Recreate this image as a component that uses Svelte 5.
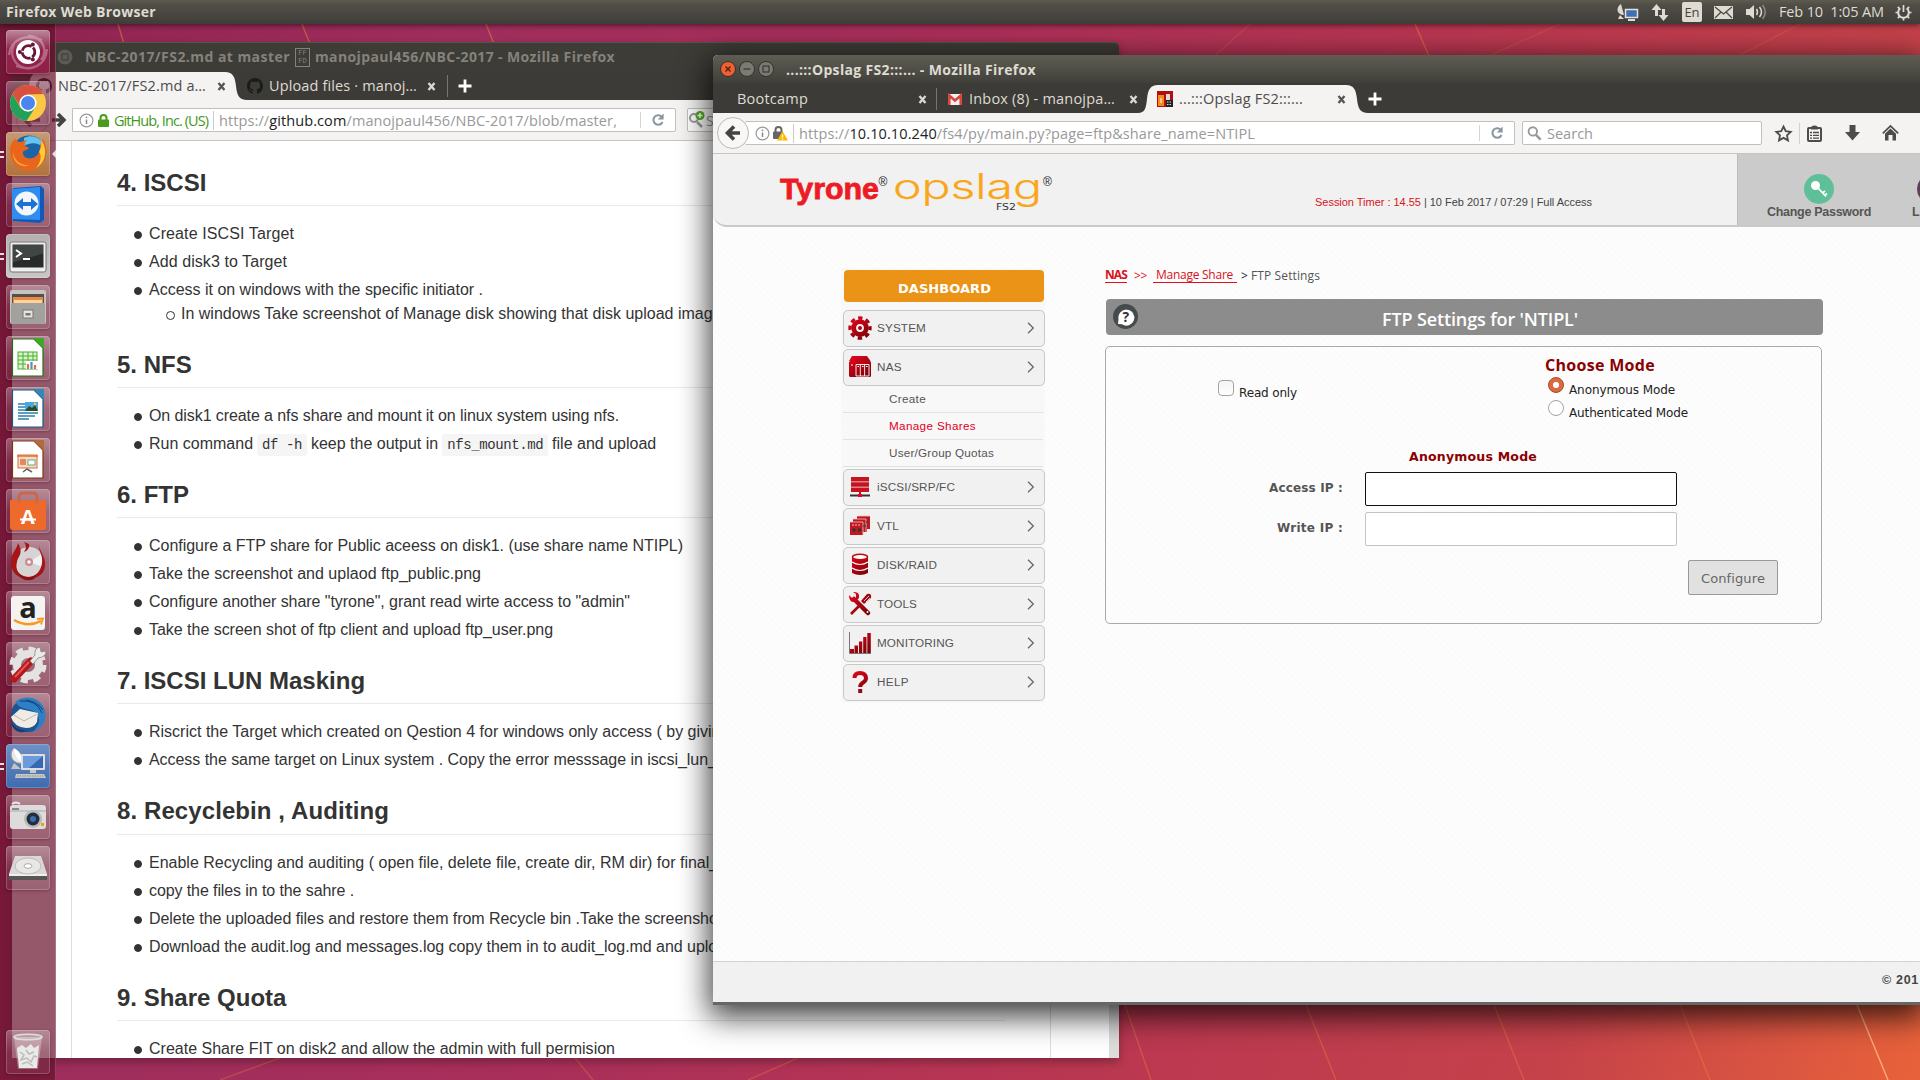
<script>
  // Adjusts tracking so that a label occupies the given width.
  function fit(node, width) {
    if (!width) return;
    const natural = node.getBoundingClientRect().width;
    const count = node.textContent.length;
    node.style.letterSpacing = `${(width - natural) / count}px`;
  }

  const launcher = [
    { id: 'dash', tone: 'wine' },
    { id: 'chrome' },
    { id: 'firefox', tone: 'amber', windows: true, focused: true },
    { id: 'teamviewer' },
    { id: 'terminal', tone: 'silver', windows: true },
    { id: 'files' },
    { id: 'calc' },
    { id: 'writer' },
    { id: 'impress' },
    { id: 'software' },
    { id: 'burner' },
    { id: 'amazon' },
    { id: 'settings' },
    { id: 'thunderbird' },
    { id: 'remote', tone: 'azure', windows: true },
    { id: 'camera' },
    { id: 'disk' },
    { id: 'trash', last: true }
  ];

  const sections = [
    {
      title: '4. ISCSI',
      items: [
        { text: 'Create ISCSI Target', w: 145 },
        { text: 'Add disk3 to Target', w: 138 },
        {
          text: 'Access it on windows with the specific initiator .',
          w: 334,
          sub: 'In windows Take screenshot of Manage disk showing that disk upload image'
        }
      ]
    },
    {
      title: '5. NFS',
      items: [
        { text: 'On disk1 create a nfs share and mount it on linux system using nfs.', w: 470 },
        { parts: ['Run command ', 'df -h', ' keep the output in ', 'nfs_mount.md', ' file and upload'] }
      ]
    },
    {
      title: '6. FTP',
      items: [
        { text: 'Configure a FTP share for Public aceess on disk1. (use share name NTIPL)', w: 534 },
        { text: 'Take the screenshot and uplaod ftp_public.png', w: 332 },
        { text: 'Configure another share "tyrone", grant read wirte access to "admin"', w: 481 },
        { text: 'Take the screen shot of ftp client and upload ftp_user.png', w: 404 }
      ]
    },
    {
      title: '7. ISCSI LUN Masking',
      items: [
        { text: 'Riscrict the Target which created on Qestion 4 for windows only access ( by giving' },
        { text: 'Access the same target on Linux system . Copy the error messsage in iscsi_lun_', tight: true }
      ]
    },
    {
      title: '8. Recyclebin , Auditing',
      w: 272,
      items: [
        { text: 'Enable Recycling and auditing ( open file, delete file, create dir, RM dir) for final_' },
        { text: 'copy the files in to the sahre .', w: 205 },
        { text: 'Delete the uploaded files and restore them from Recycle bin .Take the screenshot', tight: true },
        { text: 'Download the audit.log and messages.log copy them in to audit_log.md and upload', tight: true }
      ]
    },
    {
      title: '9. Share Quota',
      items: [{ text: 'Create Share FIT on disk2 and allow the admin with full permision', w: 466 }]
    }
  ];

  const menu = [
    { label: 'SYSTEM', icon: 'gear', w: 49 },
    {
      label: 'NAS',
      icon: 'nas',
      w: 25,
      subs: [
        { label: 'Create', w: 37 },
        { label: 'Manage Shares', w: 87, active: true },
        { label: 'User/Group Quotas', w: 105 }
      ]
    },
    { label: 'iSCSI/SRP/FC', icon: 'iscsi', w: 78 },
    { label: 'VTL', icon: 'vtl', w: 22 },
    { label: 'DISK/RAID', icon: 'raid', w: 60 },
    { label: 'TOOLS', icon: 'tools', w: 40 },
    { label: 'MONITORING', icon: 'bars', w: 77 },
    { label: 'HELP', icon: 'help', w: 32 }
  ];

  let mode = $state('anonymous');
  let readOnly = $state(false);
</script>

{#snippet github(color)}
  <svg width="16" height="16" viewBox="0 0 16 16"><path fill={color} d="M8 0C3.58 0 0 3.58 0 8c0 3.54 2.29 6.53 5.47 7.59.4.07.55-.17.55-.38 0-.19-.01-.82-.01-1.49-2.01.37-2.53-.49-2.69-.94-.09-.23-.48-.94-.82-1.13-.28-.15-.68-.52-.01-.53.63-.01 1.08.58 1.23.82.72 1.21 1.87.87 2.33.66.07-.52.28-.87.51-1.07-1.78-.2-3.64-.89-3.64-3.95 0-.87.31-1.59.82-2.15-.08-.2-.36-1.02.08-2.12 0 0 .67-.21 2.2.82.64-.18 1.32-.27 2-.27s1.36.09 2 .27c1.53-1.04 2.2-.82 2.2-.82.44 1.1.16 1.92.08 2.12.51.56.82 1.27.82 2.15 0 3.07-1.87 3.75-3.65 3.95.29.25.54.73.54 1.48 0 1.07-.01 1.93-.01 2.2 0 .21.15.46.55.38A8.01 8.01 0 0 0 16 8c0-4.42-3.58-8-8-8z" /></svg>
{/snippet}

{#snippet cross(color)}
  <svg class="cross" width="9" height="9" viewBox="0 0 9 9"><path d="M1.5 1l6 7M7.5 1l-6 7" stroke={color} stroke-width="2.3" /></svg>
{/snippet}

{#snippet plus()}
  <svg width="14" height="14" viewBox="0 0 14 14"><path d="M7 .5v13M.5 7h13" stroke="#fff" stroke-width="2.8" /></svg>
{/snippet}

{#snippet curveIn()}
  <svg width="20" height="28" viewBox="0 0 20 28"><path d="M0 28C7 28 8 23 9 14S12 0 20 0V28Z" fill="#f4f3f2" /></svg>
{/snippet}

{#snippet curveOut()}
  <svg width="22" height="28" viewBox="0 0 22 28"><path d="M0 0C8 0 10 5 11 14S14 28 22 28H0Z" fill="#f4f3f2" /></svg>
{/snippet}

{#snippet info()}
  <svg width="15" height="15" viewBox="0 0 15 15"><circle cx="7.5" cy="7.5" r="6.4" fill="none" stroke="#999" stroke-width="1.2" /><path d="M7.5 6.5V11" stroke="#888" stroke-width="1.5" /><circle cx="7.5" cy="4.3" r=".9" fill="#888" /></svg>
{/snippet}

{#snippet reload()}
  <svg width="14" height="14" viewBox="0 0 14 14"><path d="M11.2 4.2A4.8 4.8 0 1 0 11.6 9" fill="none" stroke="#8b96a3" stroke-width="2" /><path d="M12.6 0.6V6.6H6.8Z" fill="#8b96a3" /></svg>
{/snippet}

{#snippet magnifier()}
  <svg width="15" height="15" viewBox="0 0 15 15"><circle cx="5.8" cy="5.4" r="4.2" fill="none" stroke="#999" stroke-width="1.9" /><path d="M9 8.8l4.6 4.8" stroke="#999" stroke-width="2.4" /></svg>
{/snippet}

{#snippet appIcon(id)}
  <svg width="44" height="44" viewBox="0 0 44 44">
    {#if id === 'dash'}
      <path d="M3 25C5 8 20 4 36 10M41 19C40 36 25 42 10 36M8 14C2 28 12 40 26 38M35 30C43 20 36 6 22 6" fill="none" stroke="#fff" stroke-opacity=".3" stroke-width="2.4" />
      <circle cx="22" cy="22" r="12" fill="#fff" />
      <circle cx="22.5" cy="22" r="6.3" fill="none" stroke="#6b1638" stroke-width="2.8" stroke-dasharray="11.6 1.6" stroke-dashoffset="5.8" />
      <circle cx="13.8" cy="22" r="2" fill="#6b1638" /><circle cx="26.8" cy="14.5" r="2" fill="#6b1638" /><circle cx="26.8" cy="29.5" r="2" fill="#6b1638" />
    {:else if id === 'chrome'}
      <circle cx="22" cy="22" r="18" fill="#fbc846" />
      <path d="M6.4 13A18 18 0 0 1 37.6 13L22 13.5 14.5 26Z" fill="#d9503f" />
      <path d="M6.4 13A18 18 0 0 0 20.5 40L29.5 26 22 31 14.3 26.5Z" fill="#23a05a" />
      <circle cx="22" cy="22" r="8.6" fill="#fff" /><circle cx="22" cy="22" r="7" fill="#4b86ee" />
    {:else if id === 'firefox'}
      <circle cx="23" cy="20.5" r="17" fill="#1c64a8" /><path d="M18 6C27 1 38 7 39 17C32 10 25 10 18 14Z" fill="#65c3ee" />
      <path d="M4 18C4 13 7 9 9 6c1 3 3 4 5 4 3 0 4-2 7-2-2 2-3 4-2 6l4 2c-1 2-5 2-6 4-1 6 7 8 12 5 4-2 5-7 5-11l3-7c6 10 4 24-7 30C18 43 4 34 4 18Z" fill="#e9651c" />
      <path d="M35 8c7 9 5 23-5 28 5-6 6-12 3-16 2-4 3-7 2-12Z" fill="#ffcb35" />
      <path d="M7 20c1 9 9 14 17 13-9 4-18-3-17-13Z" fill="#f8a53a" />
    {:else if id === 'teamviewer'}
      <path d="M7 5L35 3l3 3v31l-4 3L7 38Z" fill="#1258b8" /><path d="M6 6l28-2v33L6 36Z" fill="#2f8df0" />
      <circle cx="20.5" cy="20.5" r="12" fill="#f2f6fa" /><path d="M10 21l7-6v4h8v-4l7 6-7 6v-4h-8v4Z" fill="#1c72d4" />
    {:else if id === 'terminal'}
      <rect x="4" y="8" width="36" height="30" rx="2" fill="#eee" stroke="#777" /><rect x="6.5" y="10.5" width="31" height="23" fill="#272c2b" />
      <path d="M6.5 10.5h31v9l-31 9Z" fill="#fff" fill-opacity=".12" /><path d="M10 16l5 3.500-5 3.500M17 25h7" fill="none" stroke="#fff" stroke-width="2" />
    {:else if id === 'files'}
      <rect x="4" y="5" width="36" height="34" rx="2" fill="#c4c3c0" /><rect x="6" y="9" width="32" height="11" fill="#55504b" />
      <path d="M7 12h30v7H7Z" fill="#e98a42" /><path d="M8 15h28v4H8Z" fill="#ffd29b" /><rect x="5" y="18" width="34" height="21" rx="1" fill="#a3a19d" /><rect x="17" y="25" width="10" height="8" fill="#e4e3e1" stroke="#777" /><rect x="19.500" y="28" width="5" height="2.500" fill="#777" />
    {:else if id === 'calc'}
      <path d="M6.500 3H28l9 9v28H6.500Z" fill="#fff" stroke="#256e14" stroke-width="1.2" /><path d="M27 2h11v11Z" fill="#3fa927" />
      <rect x="12" y="16" width="19" height="17" fill="#d9f3cf" stroke="#4aae31" /><path d="M12 20h19M12 24h19M12 28h19M17 16v17M22 16v17M27 16v17" stroke="#4aae31" />
      <rect x="20" y="25" width="12" height="8" fill="#fff" /><path d="M22 33v-5M29 33v-4" stroke="#e2703a" stroke-width="2.2" /><path d="M25.500 33v-7" stroke="#4a8fd0" stroke-width="2.2" />
    {:else if id === 'writer'}
      <path d="M6.500 3H28l9 9v28H6.500Z" fill="#fff" stroke="#145a85" stroke-width="1.2" /><path d="M27 2h11v11Z" fill="#3488b8" />
      <path d="M12 17h7M12 20h7M12 23h7M12 26h20M12 29h17M12 32h11" stroke="#2a7fb0" stroke-width="1.5" /><rect x="19" y="15" width="13" height="9" fill="#4aa8df" /><path d="M19 24l4-5 3 2 3-3 3 6Z" fill="#2d4a24" /><circle cx="29" cy="17" r="1.3" fill="#fc3" />
    {:else if id === 'impress'}
      <path d="M6.500 3H28l9 9v28H6.500Z" fill="#fff" stroke="#7a3512" stroke-width="1.2" /><path d="M27 2h11v11Z" fill="#b4683d" />
      <rect x="12" y="17" width="19" height="13" fill="#fbd9c4" stroke="#d5733c" /><path d="M11 18h21M14 22h6M14 24h6M14 26h6" stroke="#d5733c" stroke-width="1.5" /><rect x="22" y="22" width="7" height="5" fill="#fff" stroke="#5fae8a" /><path d="M17 34l4-3 5 3" fill="none" stroke="#666" stroke-width="1.5" />
    {:else if id === 'software'}
      <path d="M4 11h36v27q0 3-3 3H7q-3 0-3-3Z" fill="#ee6a2c" /><path d="M13 14V8q0-4 4-4h10q4 0 4 4v6" fill="none" stroke="#c9684a" stroke-width="3" />
      <text x="22" y="35" text-anchor="middle" class="glyph white" font-size="20">A</text><path d="M14 30.500h16" stroke="#fff" stroke-width="2" />
    {:else if id === 'burner'}
      <circle cx="23" cy="22" r="15" fill="#d8d4d4" /><path d="M23 22L36 14a15 15 0 0 1 1 13Z" fill="#fff" fill-opacity=".7" /><circle cx="23" cy="22" r="4" fill="#c98a96" /><circle cx="23" cy="22" r="1.8" fill="#fff" />
      <path d="M12 3c-1 6-6 9-7 17-1 11 6 19 16 18-9-3-12-9-10-16 1-6 7-8 1-19ZM33 6c0 6 4 9 3 17-1 7-5 12-11 15 9 0 15-6 14-16-1-7-4-9-6-16Z" fill="#a61618" /><path d="M18 2c3 4 2 7 0 10 3-1 6-4 5-8" fill="#a61618" /><path d="M12 33q10 8 20 0l-4 6q-7 3-13-1Z" fill="#8e1014" />
    {:else if id === 'amazon'}
      <rect x="5" y="5" width="34" height="34" rx="3" fill="#f4f3f2" /><text x="22" y="27" text-anchor="middle" class="glyph black" font-size="29">a</text><path d="M8 29q14 8 27 1" fill="none" stroke="#f79a1c" stroke-width="2.5" /><path d="M31 28l6-.500-2 6" fill="none" stroke="#f79a1c" stroke-width="1.8" />
    {:else if id === 'settings'}
      <circle cx="22" cy="23" r="11" fill="none" stroke="#e4e3e1" stroke-width="8" /><circle cx="22" cy="23" r="16" fill="none" stroke="#e4e3e1" stroke-width="5" stroke-dasharray="7 5.566" />
      <path d="M8 37L25 19" stroke="#b3191c" stroke-width="7" stroke-linecap="round" /><path d="M9 35L23 20" stroke="#e8524d" stroke-width="2" /><path d="M24 19l5-6q-1-7 5-8l1 5 5-1q0 6-8 7l-5 6Z" fill="#eceae8" stroke="#888" stroke-width=".8" />
    {:else if id === 'thunderbird'}
      <circle cx="22" cy="22" r="17" fill="#1c5590" />
      <path d="M9 9C22-1 39 7 39.500 22c0 9-6 15-13 17 7-6 8-12 5-17-5-8-18-4-22-13Z" fill="#2f7fc4" />
      <path d="M5 24l9-8 18 4-1 9q-3 6-11 6Q8 34 5 24Z" fill="#efece6" /><path d="M8 22l10 6 13-7" fill="none" stroke="#bbb6ac" /><path d="M5 26q3 11 16 12-10 4-15-5Z" fill="#153f74" />
      <path d="M14 8q16-2 22 12M20 7q12 2 17 10" stroke="#123f73" fill="none" />
    {:else if id === 'remote'}
      <path d="M8 4C2 10 6 21 17 19Z" fill="#e9e9e7" stroke="#999" /><path d="M8 4q9 5 9 15Q8 14 8 4Z" fill="#fff" /><path d="M8 19L5 25h10Z" fill="#c4c4c0" />
      <rect x="15" y="10" width="24" height="16" rx="1" fill="#ddd" /><rect x="17" y="12" width="20" height="12" fill="#3568b4" /><path d="M17 12h20l-14 12h-6Z" fill="#6d9ada" /><path d="M24 26h6v3h-6ZM10 30h28l2 4H9Z" fill="#c9c9c6" /><path d="M11 32h27" stroke="#888" stroke-dasharray="1.5 1" />
    {:else if id === 'camera'}
      <rect x="4" y="10" width="36" height="24" rx="3" fill="#dddcda" /><path d="M6 9q4-3 8 0" stroke="#eee" stroke-width="2" fill="none" /><path d="M4 16h36" stroke="#aaa" /><circle cx="27" cy="24" r="9" fill="#b9b9b9" /><circle cx="27" cy="24" r="6.5" fill="#222e3c" /><circle cx="27" cy="24" r="3" fill="#3a6eb0" /><rect x="35" y="28" width="3" height="3" fill="#f49b1f" /><path d="M6 13h7v2H6Z" fill="#888" />
    {:else if id === 'disk'}
      <path d="M9 10h26l6 18v6H3v-6Z" fill="#d9d8d7" /><path d="M3 28h38v6H3Z" fill="#575655" /><path d="M3 28h38v2H3Z" fill="#efefef" /><ellipse cx="22" cy="20" rx="13" ry="8" fill="#e8e7e6" stroke="#bbb" /><ellipse cx="22" cy="20" rx="4" ry="2.3" fill="#fff" stroke="#aaa" />
    {:else}
      <path d="M8 7l4 32h20l4-32Z" fill="#fff" fill-opacity=".3" /><path d="M11 18l5-3 4 3 5-4 3 4 5-3-2 23H13Z" fill="#e9e9e8" /><path d="M14 22l4 3-3 5 6-2 4 4 3-6 3 1M20 20l3 4 5-2M16 34l5-2 6 4" stroke="#bdbcbb" fill="none" stroke-width="1.5" /><ellipse cx="22" cy="7" rx="14" ry="2.8" fill="#fff" fill-opacity=".2" stroke="#ddd" stroke-width="1.6" />
    {/if}
  </svg>
{/snippet}

{#snippet menuIcon(id)}
  <svg width="24" height="24" viewBox="0 0 24 24">
    {#if id === 'gear'}
      <circle cx="12" cy="12" r="6.3" fill="none" stroke="url(#red)" stroke-width="4.8" /><circle cx="12" cy="12" r="10" fill="none" stroke="url(#red)" stroke-width="3.4" stroke-dasharray="4.4 3.454" stroke-dashoffset="2.2" /><circle cx="12" cy="12" r="2" fill="url(#red)" />
    {:else if id === 'nas'}
      <path d="M4 1h15l3.500 5H1Z" fill="url(#red)" /><rect x="1" y="6" width="22" height="16" rx="1.5" fill="url(#red)" /><path d="M8 9.500h13V21H8ZM12.300 9.500V21M16.600 9.500V21" fill="none" stroke="#fff" stroke-width=".9" /><path d="M3 10h2M9.500 11.500h1.500M14 11.500h1.500M18 11.500h1.500" stroke="#fff" />
    {:else if id === 'iscsi'}
      <path d="M3 2h18v4.500H3ZM3 7.300h18v4.500H3ZM3 12.600h18v4.500H3Z" fill="#c5141f" /><path d="M12 17v4" stroke="#c5141f" stroke-width="2" /><path d="M2 20.500h20" stroke="#333" stroke-width="2" /><path d="M10 20.500h4" stroke="#e02" stroke-width="3" />
    {:else if id === 'vtl'}
      <path d="M9 2h13v13h-3v3h-4v3H2V8h3V5h4Z" fill="#c01820" /><path d="M2 8h13v13M5 5h13v13M9 2h13" fill="none" stroke="#f3c4c6" stroke-width=".8" /><circle cx="6" cy="16" r="1.8" fill="#333" /><circle cx="11.5" cy="16" r="1.8" fill="#333" /><path d="M4 11h9" stroke="#fbb" stroke-dasharray="2 1" /><circle cx="19.5" cy="8" r="1.3" fill="#444" /><circle cx="16.5" cy="12" r="1.3" fill="#444" />
    {:else if id === 'raid'}
      <path d="M4 4h16v16q-8 4-16 0Z" fill="url(#red)" /><ellipse cx="12" cy="4" rx="7.5" ry="2.8" fill="#fff" stroke="#c20b16" stroke-width="1.5" /><path d="M4 9q8 5 16 0M4 15q8 5 16 0" fill="none" stroke="#fff" stroke-width="1.2" />
    {:else if id === 'tools'}
      <path d="M6 7l14 14" stroke="url(#red)" stroke-width="4.5" stroke-linecap="round" /><path d="M1 3l4 4 3-1 0-4-3-2q7-1 6 6l-4 4Q1 11 1 3Z" fill="url(#red)" /><path d="M3 22L13 12" stroke="#a20710" stroke-width="2.6" /><path d="M13 9l6-7q5-1 4 4l-7 6Z" fill="#a30912" /><path d="M16 9l5-5M18 10l4-4" stroke="#eee" stroke-width=".8" /><circle cx="19.5" cy="20" r="1" fill="#fff" />
    {:else if id === 'bars'}
      <path d="M1.500 1v21.500H23" fill="none" stroke="#777" /><path d="M2 18h4v4H2ZM6.500 14.500h3.500V22H6.500ZM11 10.500h3.300V22H11ZM15.200 6h3.300v16h-3.300ZM19.300 2h3.500v20h-3.500Z" fill="url(#red)" />
    {:else}
      <path d="M6.500 8Q6.500 3 12 3t6 5q0 3-3.500 5-2.300 1.500-2.300 4" fill="none" stroke="url(#red)" stroke-width="4" /><rect x="10.2" y="19" width="4" height="4" fill="#a0050f" />
    {/if}
  </svg>
{/snippet}

<svg class="defs" width="0" height="0" aria-hidden="true">
  <defs><linearGradient id="red" gradientUnits="userSpaceOnUse" x1="4" y1="2" x2="18" y2="22"><stop offset="0" stop-color="#e0061c" /><stop offset="1" stop-color="#7c0208" /></linearGradient></defs>
</svg>

<div class="desktop">
  <svg class="wall" width="1920" height="1080" viewBox="0 0 1920 1080">
    <g stroke="#f08a3c" fill="none" stroke-width="1.5">
      <path d="M118 24l9 30M302 24l8 20M486 24l8 20M1415 24l14 32" opacity=".45" />
      <path d="M1560 24l-80 36M1800 24l-70 36M1250 24l-40 36" opacity=".18" />
      <path d="M1125 1005l26 75M1306 1005l30 75M1494 1005l30 75M1680 1005l30 75" opacity=".35" />
      <path d="M1857 1005l31 75" stroke="#ffb47c" opacity=".85" />
      <path d="M798 1058l-50 22M280 1058l-60 22M575 1058l18 22" opacity=".3" />
    </g>
  </svg>

  <header class="panel-bar">
    <span class="app-name" use:fit={150}>Firefox Web Browser</span>
    <div class="indicators">
      <svg width="23" height="18" viewBox="0 0 23 18"><path d="M5 1C-1 5 1 12 8 12Z" fill="#ddd8cf" /><path d="M4 12l-2 4h6Z" fill="#ddd8cf" /><rect x="9.5" y="6.5" width="12" height="8" fill="#3f70b6" stroke="#e6e2da" stroke-width="1.5" /><path d="M12 17h7" stroke="#ddd" stroke-width="2" /></svg>
      <svg class="i-net" width="18" height="17" viewBox="0 0 18 17"><path d="M5.500 12V3M12.500 5v9" stroke="#dfdbd2" stroke-width="3" /><path d="M.500 6L5.500 0l5 6ZM7.500 11l5 6 5-6Z" fill="#dfdbd2" /></svg>
      <span class="lang">En</span>
      <svg class="i-mail" width="19" height="13" viewBox="0 0 19 13"><rect width="19" height="13" fill="#dfdbd2" /><path d="M1 1l8.500 7L18 1M1 12l6-6M18 12l-6-6" fill="none" stroke="#4b4943" stroke-width="1.3" /></svg>
      <svg class="i-vol" width="21" height="16" viewBox="0 0 21 16"><path d="M0 5h3.500L8 1v14L3.500 11H0Z" fill="#dfdbd2" /><path d="M10.500 5q2 3 0 6M13.500 3q4 5 0 10" fill="none" stroke="#dfdbd2" stroke-width="1.5" /><path d="M16.500 1q5.500 7 0 14" fill="none" stroke="#8d8a82" stroke-width="1.5" /></svg>
      <span class="clock" use:fit={105}>Feb 10&nbsp; 1:05 AM</span>
      <svg class="i-power" width="17" height="17" viewBox="0 0 17 17"><path d="M5.300 4.300a5.300 5.300 0 1 0 6.400 0" fill="none" stroke="#dfdbd2" stroke-width="2" /><path d="M8.500 1v7M.500 8.500h3M13.500 8.500h3M8.500 13.500v3M2.800 2.800l2 2M14.200 2.800l-2 2M2.800 14.200l2-2M14.200 14.200l-2-2" stroke="#dfdbd2" stroke-width="1.7" /></svg>
    </div>
  </header>

  <section class="window back">
    <div class="titlebar">
      <svg width="16" height="16" viewBox="0 0 16 16"><circle cx="8" cy="8" r="7.5" fill="#5d5b56" /><rect x="5" y="5" width="6" height="6" fill="none" stroke="#3c3b37" /></svg>
      <span class="title first" use:fit={205}>NBC-2017/FS2.md at master</span>
      <span class="tofu"><i>FF</i><i>FD</i></span>
      <span class="title" use:fit={300}>manojpaul456/NBC-2017 - Mozilla Firefox</span>
    </div>
    <div class="tabs">
      {@render curveIn()}
      <div class="tab active first-tab">
        {@render github('#222')}
        <span use:fit={148}>NBC-2017/FS2.md a…</span>
        {@render cross('#555')}
      </div>
      {@render curveOut()}
      <div class="tab second-tab">
        {@render github('#1b1b1a')}
        <span use:fit={148}>Upload files · manoj…</span>
        {@render cross('#ddd9d0')}
      </div>
      <div class="new-tab">{@render plus()}</div>
    </div>
    <div class="nav">
      <svg width="60" height="32" viewBox="0 0 60 32"><circle cx="20" cy="16" r="15.5" fill="#f7f6f5" stroke="#bbb" /><path d="M28 16H13m6-6l-6 6 6 6" fill="none" stroke="#555" stroke-width="3.5" /><path d="M40 16h11m-5-6l6 6-6 6" fill="none" stroke="#444" stroke-width="3.5" /></svg>
      <div class="url back-url">
        {@render info()}
        <svg class="lock" width="11" height="13" viewBox="0 0 11 13"><path d="M2.500 6V4a3 3 0 0 1 6 0v2" fill="none" stroke="#4a9a1c" stroke-width="2" /><rect x="0" y="5.5" width="11" height="7.5" rx="1" fill="#4a9a1c" /></svg>
        <span class="secure" use:fit={94}>GitHub, Inc. (US)</span>
        <span class="addr" use:fit={404}>https://<b>github.com</b>/manojpaul456/NBC-2017/blob/master,</span>
        <span class="reload">{@render reload()}</span>
      </div>
      <div class="search back-search">
        <svg width="18" height="20" viewBox="0 0 18 20"><circle cx="6" cy="8" r="4" fill="none" stroke="#999" stroke-width="2" /><path d="M9 12l5 5" stroke="#999" stroke-width="2.5" /><circle cx="12" cy="5.5" r="4.5" fill="#4caf1f" /><path d="M9.500 5.500h5M12 3v5" stroke="#fff" stroke-width="1.5" /></svg>
        <span>Search</span>
      </div>
    </div>
    <div class="readme">
      <article>
        {#each sections as s}
          <h2><span use:fit={s.w}>{s.title}</span></h2>
          <ul>
            {#each s.items as item}
              <li>
                {#if item.parts}
                  {#each item.parts as p, i}{#if i % 2}<code>{p}</code>{:else}{p}{/if}{/each}
                {:else}<span class={{ tight: item.tight }} use:fit={item.w}>{item.text}</span>{/if}
                {#if item.sub}<ul class="nested"><li>{item.sub}</li></ul>{/if}
              </li>
            {/each}
          </ul>
        {/each}
      </article>
      <div class="scroll"></div>
    </div>
  </section>

  <nav class="launcher">
    {#each launcher as app}
      <div class={['tile', app.tone, app.last && 'last']}>
        {@render appIcon(app.id)}
        {#if app.windows}<span class="pips"></span>{/if}
        {#if app.focused}<span class="arrow"></span>{/if}
      </div>
    {/each}
  </nav>

  <section class="window front">
    <div class="titlebar">
      <svg width="16" height="16" viewBox="0 0 16 16"><circle cx="8" cy="8" r="7.5" fill="#ee5f31" stroke="#34322d" /><path d="M5.500 5.500l5 5M10.500 5.500l-5 5" stroke="#54210f" stroke-width="1.4" /></svg>
      <svg width="16" height="16" viewBox="0 0 16 16"><circle cx="8" cy="8" r="7.5" fill="#7b7a73" stroke="#34322d" /><path d="M4.500 8h7" stroke="#3a3935" stroke-width="1.3" /></svg>
      <svg width="16" height="16" viewBox="0 0 16 16"><circle cx="8" cy="8" r="7.5" fill="#7b7a73" stroke="#34322d" /><rect x="5" y="5" width="6" height="6" fill="none" stroke="#3a3935" stroke-width="1.2" /></svg>
      <span class="title" use:fit={250}>...:::Opslag FS2:::... - Mozilla Firefox</span>
    </div>
    <div class="tabs">
      <div class="tab t1"><span use:fit={71}>Bootcamp</span>{@render cross('#ddd9d0')}</div>
      <div class="tab t2">
        <svg width="14" height="11" viewBox="0 0 14 11"><rect width="14" height="11" rx="1" fill="#f3f1ee" /><path d="M1.300 11V1.500L7 6.500l5.700-5V11" fill="none" stroke="#d8433a" stroke-width="2.5" /></svg>
        <span use:fit={146}>Inbox (8) - manojpa…</span>{@render cross('#ddd9d0')}
      </div>
      {@render curveIn()}
      <div class="tab active t3">
        <svg width="16" height="16" viewBox="0 0 16 16"><rect width="16" height="16" fill="#b40d10" /><rect x="1" y="4" width="6" height="11" fill="#f58a1c" /><rect x="9" y="3" width="4" height="6" fill="#ddd" /><rect x="9" y="9" width="7" height="7" fill="#222" /><path d="M10 11h5M10 13.500h5" stroke="#ddd" stroke-dasharray="1.5 1" /><path d="M4 7v5" stroke="#fff" /></svg>
        <span use:fit={124}>...:::Opslag FS2:::...</span>{@render cross('#555')}
      </div>
      {@render curveOut()}
      <div class="new-tab">{@render plus()}</div>
    </div>
    <div class="nav">
      <svg class="back-btn" width="32" height="32" viewBox="0 0 32 32"><circle cx="16" cy="16" r="15.5" fill="#f8f7f6" stroke="#bcbab8" /><path d="M23 16H11m6-6.500l-6.500 6.500 6.500 6.500" fill="none" stroke="#444" stroke-width="3.6" /></svg>
      <div class="url front-url">
        {@render info()}
        <svg class="warn" width="15" height="15" viewBox="0 0 15 15"><path d="M2.500 6V4a3 3 0 0 1 6 0v2" fill="none" stroke="#666" stroke-width="2" /><rect y="5.5" width="10" height="7.5" rx="1" fill="#666" /><path d="M9.500 5l5.500 9.500H4Z" fill="#fbb800" /><path d="M9.500 8.500v3M9.500 12.300v1.200" stroke="#fff" stroke-width="1.3" /></svg>
        <span class="addr" use:fit={462}>https://<b>10.10.10.240</b>/fs4/py/main.py?page=ftp&amp;share_name=NTIPL</span>
        <span class="reload">{@render reload()}</span>
      </div>
      <div class="search front-search">{@render magnifier()}<span use:fit={46}>Search</span></div>
      <div class="tools">
        <svg width="17" height="17" viewBox="0 0 17 17"><path d="M8.500 1.500l2.200 4.700 5 .600-3.700 3.500 1 5.100-4.500-2.500L4 15.400l1-5.100L1.300 6.800l5-.600Z" fill="none" stroke="#4c4c4c" stroke-width="1.8" /></svg>
        <i class="bar"></i>
        <svg width="15" height="17" viewBox="0 0 15 17"><rect x="1" y="3" width="13" height="13" rx="1" fill="none" stroke="#4c4c4c" stroke-width="2" /><path d="M4 3q0-2.500 3.500-2.500T11 3v1.500H4Z" fill="#4c4c4c" /><path d="M3 7.500h2M6 7.500h6M3 10.300h2M6 10.300h6M3 13.100h2M6 13.100h6" stroke="#4c4c4c" stroke-width="1.3" /></svg>
        <svg class="i-down" width="15" height="16" viewBox="0 0 15 16"><path d="M4.500 0h6v7H15l-7.500 8.500L0 7h4.500Z" fill="#4c4c4c" /></svg>
        <svg class="i-home" width="17" height="16" viewBox="0 0 17 16"><path d="M.800 8.300L8.500 1l7.700 7.300" fill="none" stroke="#4c4c4c" stroke-width="1.7" /><path d="M3 8.700L8.500 3.500 14 8.700V15.500h-3.500V10h-4v5.500H3Z" fill="#4c4c4c" /></svg>
      </div>
    </div>

    <div class="site-head">
      <svg class="logo" width="280" height="50" viewBox="0 0 280 50">
        <text x="0" y="29" textLength="99" lengthAdjust="spacingAndGlyphs" class="tyrone">Tyrone</text>
        <text x="98.5" y="16" class="reg">®</text>
        <text x="113" y="29" textLength="149" lengthAdjust="spacingAndGlyphs" class="opslag">opslag</text>
        <text x="216" y="40" textLength="20" lengthAdjust="spacingAndGlyphs" class="fs2">FS2</text>
        <text x="263" y="16" class="reg">®</text>
      </svg>
      <p class="session" use:fit={277}><em>Session Timer : 14.55</em> | 10 Feb 2017 / 07:29 | Full Access</p>
      <div class="account">
        <div class="action">
          <svg width="30" height="30" viewBox="0 0 30 30"><circle cx="15" cy="15" r="15" fill="#5fbf98" /><circle cx="11.5" cy="11.5" r="4.5" fill="#fff" /><path d="M14 14l8 8.500M18.500 19l2.500-2M20.500 21.500l2.500-2" stroke="#fff" stroke-width="1.8" /></svg>
          <b use:fit={104}>Change Password</b>
        </div>
        <div class="action out">
          <svg width="30" height="30" viewBox="0 0 30 30"><circle cx="15" cy="15" r="15" fill="#5d3f58" /></svg>
          <b>Lo</b>
        </div>
      </div>
    </div>

    <div class="site-body">
      <aside>
        <a class="dash" href="#dashboard"><span use:fit={93}>DASHBOARD</span></a>
        {#each menu as m}
          <div class="entry">
            {@render menuIcon(m.icon)}
            <span use:fit={m.w}>{m.label}</span>
            <svg class="chev" width="8" height="12" viewBox="0 0 8 12"><path d="M1 .800L6.300 6 1 11.200" fill="none" stroke="#666" stroke-width="1.3" /></svg>
          </div>
          {#if m.subs}
            <div class="subs">
              {#each m.subs as s}<div class={['sub', s.active && 'on']}><span use:fit={s.w}>{s.label}</span></div>{/each}
            </div>
          {/if}
        {/each}
      </aside>

      <main>
        <div class="crumbs">
          <b class="link" use:fit={22}>NAS</b><span class="gt2" use:fit={13}>&gt;&gt;</span><span class="link manage"><span use:fit={77}>Manage Share</span></span><span class="gt">&gt;</span><span use:fit={69}>FTP Settings</span>
        </div>
        <div class="heading">
          <svg width="25" height="25" viewBox="0 0 25 25"><circle cx="12.5" cy="12.5" r="12.5" fill="#454a4c" /><path d="M5 20l.500-5A8 8 0 1 1 9 20.300Z" fill="#fff" /><text x="12.8" y="17.5" text-anchor="middle" class="q">?</text></svg>
          <h1 use:fit={196}>FTP Settings for 'NTIPL'</h1>
        </div>
        <form class="card">
          <div class="options">
            <label class="check"><input type="checkbox" bind:checked={readOnly} /><span use:fit={58}>Read only</span></label>
            <fieldset>
              <h3 use:fit={110}>Choose Mode</h3>
              <label><input type="radio" value="anonymous" bind:group={mode} /><span use:fit={106}>Anonymous Mode</span></label>
              <label><input type="radio" value="auth" bind:group={mode} /><span use:fit={119}>Authenticated Mode</span></label>
            </fieldset>
          </div>
          <h4 use:fit={128}>Anonymous Mode</h4>
          <div class="field"><label for="a-ip"><span use:fit={74}>Access IP :</span></label><input id="a-ip" class="current" type="text" /></div>
          <div class="field"><label for="w-ip"><span use:fit={66}>Write IP :</span></label><input id="w-ip" type="text" /></div>
          <button type="button"><span use:fit={64}>Configure</span></button>
        </form>
      </main>
    </div>
    <footer><b use:fit={37}>© 201</b></footer>
  </section>
</div>

<style>
  :global(body) { margin: 0; overflow: hidden; }
  * { box-sizing: border-box; }
  svg { flex: none; display: block; overflow: visible; }
  span, b, p { flex: none; white-space: nowrap; }
  .defs { position: absolute; }

  .desktop {
    position: relative; width: 1920px; height: 1080px; overflow: hidden;
    font-family: 'Open Sans', 'Noto Sans', sans-serif; font-size: 14.5px;
    background: linear-gradient(110deg, #8f2450 0, #9f2e5c 20%, #a92f5a 40%, #b93652 62%, #c5424a 84%, #e8623a 100%);
  }
  .wall { position: absolute; inset: 0; }

  .panel-bar {
    position: relative; z-index: 5; height: 24px; display: flex; align-items: center; padding: 0 8px 0 6px;
    color: #dfdbd2; background: linear-gradient(#5e5c50, #504e47 20%, #3e3d38); box-shadow: 0 1px 6px rgba(0, 0, 0, .6);
  }
  .app-name { font-weight: 700; font-size: 14px; padding-bottom: 1px; }
  .indicators { margin-left: auto; display: flex; align-items: center; }
  .i-net { margin-left: 12px; }
  .lang { margin-left: 13px; width: 20px; height: 20px; border-radius: 2px; background: #dfdbd2; color: #45433e; font-size: 13px; line-height: 20px; text-align: center; }
  .i-mail { margin-left: 12px; }
  .i-vol { margin-left: 13px; }
  .clock { margin-left: 12px; padding-bottom: 1px; }
  .i-power { margin-left: 11px; }

  .window { position: absolute; display: flex; flex-direction: column; }
  .back { left: 12px; top: 42px; width: 1107px; height: 1016px; box-shadow: 0 4px 10px rgba(0, 0, 0, .3); border-radius: 5px 5px 0 0; }
  .front { left: 713px; top: 55px; width: 1207px; height: 950px; border-bottom: 3px solid #666; box-shadow: 0 8px 30px 4px rgba(0, 0, 0, .75); border-radius: 5px 0 0 0; background: #fcfcfc; }

  .titlebar { display: flex; align-items: center; flex: none; }
  .back .titlebar { height: 29px; padding-left: 45px; background: #3d3c37; color: #85827b; border-radius: 5px 5px 0 0; border-top: 1px solid #55534c; }
  .front .titlebar { height: 28px; padding-left: 7px; gap: 3px; background: linear-gradient(#5f5d53, #403f3a); color: #dfdbd2; border-radius: 5px 0 0 0; }
  .title { font-weight: 700; font-size: 14px; padding-bottom: 1px; }
  .back .title.first { margin-left: 12px; }
  .front .title { margin-left: 9px; padding: 1px 0 0; }
  .tofu { width: 15px; height: 19px; margin: 0 5px; border: 1px solid #85827b; font: 7px/8px 'Liberation Mono', monospace; text-align: center; display: grid; }
  .tofu i { font-style: normal; }

  .tabs { display: flex; align-items: flex-end; flex: none; background: #3c3b37; }
  .back .tabs { height: 29px; padding-left: 8px; }
  .front .tabs { height: 30px; }
  .tab { height: 28px; display: flex; align-items: center; color: #dfdbd2; }
  .tab span { padding-bottom: 2px; }
  .tab.active { background: #f4f3f2; color: #4c4c4c; }
  .tab .cross { margin-left: auto; }
  .first-tab { width: 186px; margin-right: -1px; }
  .first-tab svg:first-child { margin-left: -4px; }
  .first-tab span { margin-left: 6px; }
  .second-tab { width: 201px; padding: 0 11px 0 0; border-right: 1px solid #77756e; height: 22px; margin-bottom: 3px; }
  .second-tab span { margin-left: 6px; }
  .new-tab { height: 28px; display: flex; align-items: center; padding-bottom: 1px; }
  .back .new-tab { margin-left: 10px; }
  .t1 { width: 224px; padding: 0 9px 0 24px; height: 22px; margin-bottom: 3px; border-right: 1px solid #77756e; }
  .t2 { width: 201px; padding: 0 0 0 11px; }
  .t2 span { margin-left: 7px; }
  .t3 { width: 189px; margin-left: -1px; }
  .t3 span { margin-left: 6px; }

  .nav { flex: none; height: 41px; display: flex; align-items: center; background: #f4f3f2; border-bottom: 1px solid #c6c4c2; }
  .url, .search { height: 24px; background: #fff; border: 1px solid #c2c0be; border-radius: 2px; display: flex; align-items: center; color: #999; }
  .back-url { width: 604px; padding-left: 6px; border-radius: 0 2px 2px 0; }
  .lock { margin-left: 4px; }
  .secure { margin: 0 5px; color: #43981a; }
  .back-url .addr { border-left: 1px solid #ccc; padding-left: 5px; }
  .addr b { font-weight: 400; color: #222; }
  .reload { margin-left: auto; border-left: 1px solid #d6d4d2; height: 16px; padding: 1px 10px 0 10px; }
  .back-search { margin-left: 11px; width: 300px; }
  .back-btn { margin-left: 4px; z-index: 1; position: relative; }
  .front-url { width: 770px; margin-left: -4px; padding-left: 10px; border-left: 0; }
  .warn { margin: 0 5px 0 3px; }
  .front-url .addr { border-left: 1px solid #ccc; padding-left: 5px; }
  .front-search { margin-left: 7px; width: 240px; padding-left: 4px; }
  .front-search span { margin-left: 5px; }
  .tools { display: flex; align-items: center; margin-left: 13px; }
  .bar { width: 1px; height: 21px; background: #d2d0ce; margin: 0 7px 0 7px; }
  .i-down { margin-left: 23px; }
  .i-home { margin-left: 22px; }

  .readme { flex: 1; min-height: 0; overflow: hidden; display: flex; background: #fff; }
  article {
    margin-left: 59px; width: 980px; padding: 2.6px 45px 0 45px; border-left: 1px solid #ddd; border-right: 1px solid #ddd;
    font: 16px/24px 'Liberation Sans', Arial, sans-serif; color: #333;
  }
  h2 { margin: 24px 0 16px; padding-bottom: 7.2px; font-size: 24px; line-height: 30px; font-weight: 700; border-bottom: 1px solid #eaeaea; }
  article ul { margin: 0; padding-left: 32px; white-space: nowrap; list-style: none; }
  article li { position: relative; }
  article li + li { margin-top: 4px; }
  article li::before { content: ''; position: absolute; left: -15px; top: 9px; width: 6px; height: 6px; border: 1px solid #333; border-radius: 50%; background: #333; }
  .nested li::before { background: none; width: 7px; height: 7px; }
  .tight { letter-spacing: -.05px; }
  code { font: 14px 'Liberation Mono', monospace; padding: 3px 5px; margin: 0 -.5px; background: #f5f5f5; border-radius: 3px; letter-spacing: -.4px; }
  .scroll { margin-left: auto; width: 10px; background: #dcdcdc; }

  .launcher {
    position: absolute; left: 0; top: 24px; width: 56px; height: 1056px; padding: 6px 0 6px 6px;
    background: rgba(104, 17, 44, .7); border-right: 1px solid rgba(255, 255, 255, .18);
    display: flex; flex-direction: column; gap: 7px;
  }
  .tile {
    position: relative; flex: none; width: 44px; height: 44px; border-radius: 4px;
    background: linear-gradient(rgba(255, 255, 255, .3), rgba(255, 255, 255, .1) 50%, rgba(255, 255, 255, .06));
    box-shadow: inset 0 0 0 1px rgba(255, 255, 255, .2), 0 1px 3px rgba(40, 0, 20, .3);
  }
  .tile.last { margin-top: auto; }
  .wine { background: linear-gradient(#bc8a9c, #93234c 45%, #8e1f45); }
  .amber { background: linear-gradient(#c59b76, #b2713c); }
  .silver { background: linear-gradient(#b5afb0, #c9c6c6); }
  .azure { background: linear-gradient(#6f90c6, #3e6bb0); }
  .pips { position: absolute; left: -6px; top: 19px; width: 4px; height: 7px; border: solid #e8dfe2; border-width: 2px 0; }
  .arrow { position: absolute; right: -6px; top: 18px; border: 4px solid transparent; border-right-color: #e8dfe2; border-left: 0; }
  .glyph { font-family: 'Open Sans', sans-serif; font-weight: 700; }
  .glyph.white { fill: #fff; }
  .glyph.black { fill: #222; }

  .site-head { flex: none; height: 73px; display: flex; background: #f1f1f1; border-bottom: 2px solid #c9c9c9; border-radius: 0 0 0 14px; font-family: 'Liberation Sans', Arial, sans-serif; overflow: hidden; }
  .logo { margin: 16px 0 0 67px; }
  .tyrone { font: 700 30px 'Liberation Sans', sans-serif; fill: #ed1c24; stroke: #ed1c24; stroke-width: .8px; }
  .opslag { font: 300 35px Inter, sans-serif; fill: #f9a61a; stroke: #f9a61a; stroke-width: .2px; }
  .reg { font: 12px 'Liberation Sans', sans-serif; fill: #222; }
  .fs2 { font: 9px 'DejaVu Sans', sans-serif; fill: #333; }
  .session { margin: 41px 0 0 255px; font-size: 11px; line-height: 14px; color: #444; }
  .session em { font-style: normal; color: #d9121b; }
  .account { margin-left: auto; width: 183px; background: #cbcbcb; border-left: 1px solid #bdbdbd; display: flex; overflow: hidden; padding-top: 20px; font-size: 12.5px; color: #555; }
  .action { flex: none; width: 104px; margin-left: 29px; display: flex; flex-direction: column; align-items: center; line-height: 16px; }
  .action.out { width: 44px; margin-left: 41px; align-items: flex-start; }
  .action.out svg { margin-left: 5px; }

  .site-body { flex: 1; min-height: 0; display: flex; background: repeating-linear-gradient(45deg, #fdfdfd 0 2px, #fbfbfb 2px 4px); }
  aside { margin: 41px 0 0 128px; width: 204px; padding: 2px 0 0 2px; height: 435px; background: #f8f8f8; font: 11.7px 'Liberation Sans', Arial, sans-serif; color: #555; }
  .dash { display: flex; align-items: center; justify-content: center; width: 200px; height: 32px; margin: 0 0 8px 1px; padding: 4px 0 0 1px; background: #eb9316; border-radius: 4px; color: #fff; font: 700 13px 'DejaVu Sans', sans-serif; text-decoration: none; }
  .entry { width: 202px; height: 37px; margin-bottom: 2px; padding: 0 9px 2px 4px; display: flex; align-items: center; background: #f1f1f1; border: 1px solid #c8c8c8; border-radius: 5px; }
  .entry span { margin-left: 5px; }
  .chev { margin-left: auto; }
  .subs { padding-bottom: 2px; margin-top: -2px; }
  .sub { width: 200px; height: 27px; padding: 0 0 2px 46px; display: flex; align-items: center; border-bottom: 1px solid #e2e2e2; }
  .sub.on { color: #e1001e; }

  main { margin-left: 60px; width: 718px; font: 12px 'DejaVu Sans', Verdana, sans-serif; color: #222; }
  .crumbs { margin-top: 38px; height: 20px; display: flex; align-items: center; font: 12px 'Open Sans', sans-serif; color: #555; }
  .link { color: #d9121b; border-bottom: 1px solid #d9121b; line-height: 14px; }
  .gt2 { margin: 0 6px 0 7px; color: #d9121b; }
  .manage { padding: 0 4px 0 3px; }
  .gt { margin: 0 4px 0 4px; width: 6px; color: #222; }
  .heading { margin: 14px 0 0 1px; width: 717px; height: 36px; padding: 0 0 2px 7px; display: flex; align-items: center; background: #8c8c8c; border-radius: 4px; }
  .q { font: 700 14px 'Open Sans', sans-serif; fill: #333; }
  h1 { margin: 6px 0 0 244px; font: 600 18px/24px 'Open Sans', sans-serif; color: #fff; white-space: nowrap; flex: none; }
  .card { margin-top: 11px; width: 717px; height: 278px; border: 1px solid #a9a9a9; border-radius: 5px; }
  .options { display: flex; height: 101px; }
  .check { margin: 33px 0 0 112px; width: 327px; display: flex; }
  fieldset { border: 0; margin: 0; padding: 4px 0 0; }
  h3 { margin: 0; display: inline-block; font: 700 16px/28px 'Open Sans', sans-serif; color: #8b0000; white-space: nowrap; }
  h4 { margin: 0 0 0 303px; display: inline-block; font-size: 12.5px; line-height: 18px; color: #8b0000; white-space: nowrap; }
  fieldset label { display: flex; height: 23px; padding-left: 3px; }
  .options span { padding-top: 5px; line-height: 16px; }
  fieldset label span { margin-top: -2px; }
  input { margin: 0; }
  .options input { appearance: none; flex: none; width: 16px; height: 16px; margin-right: 5px; border: 1px solid #a5a3a0; border-radius: 50%; background: #fff; }
  .options .check input { border-radius: 4px; background: linear-gradient(#f4f4f4, #fff); }
  .options input:checked { background: radial-gradient(circle, #fff 0 2.8px, #dd6a3e 3.3px); border-color: #a74a25; }
  fieldset label input { margin-top: -2px; }
  .field { display: flex; align-items: center; height: 34px; margin: 6px 0 0; font-weight: 700; color: #555; }
  .field label { width: 237px; text-align: right; display: flex; justify-content: flex-end; padding-bottom: 2px; }
  .field input { margin-left: 22px; width: 312px; height: 34px; border: 1px solid #c4c4c4; border-radius: 2px; background: #fff; outline: none; }
  .field .current { border-color: #111; }
  button { display: block; margin: 14px 0 0 582px; width: 90px; height: 35px; padding: 2px 0 0; border: 1px solid #999; border-radius: 2px; background: #e1e1e1; color: #666; font: 13px 'DejaVu Sans', sans-serif; }
  button span { display: inline-block; }

  footer { flex: none; height: 41px; padding: 11px 0 0 1169px; overflow: hidden; white-space: nowrap; background: #f1f1f1; border-top: 1px solid #d2d2d2; font: 12.5px 'Liberation Sans', Arial, sans-serif; color: #444; }
</style>
